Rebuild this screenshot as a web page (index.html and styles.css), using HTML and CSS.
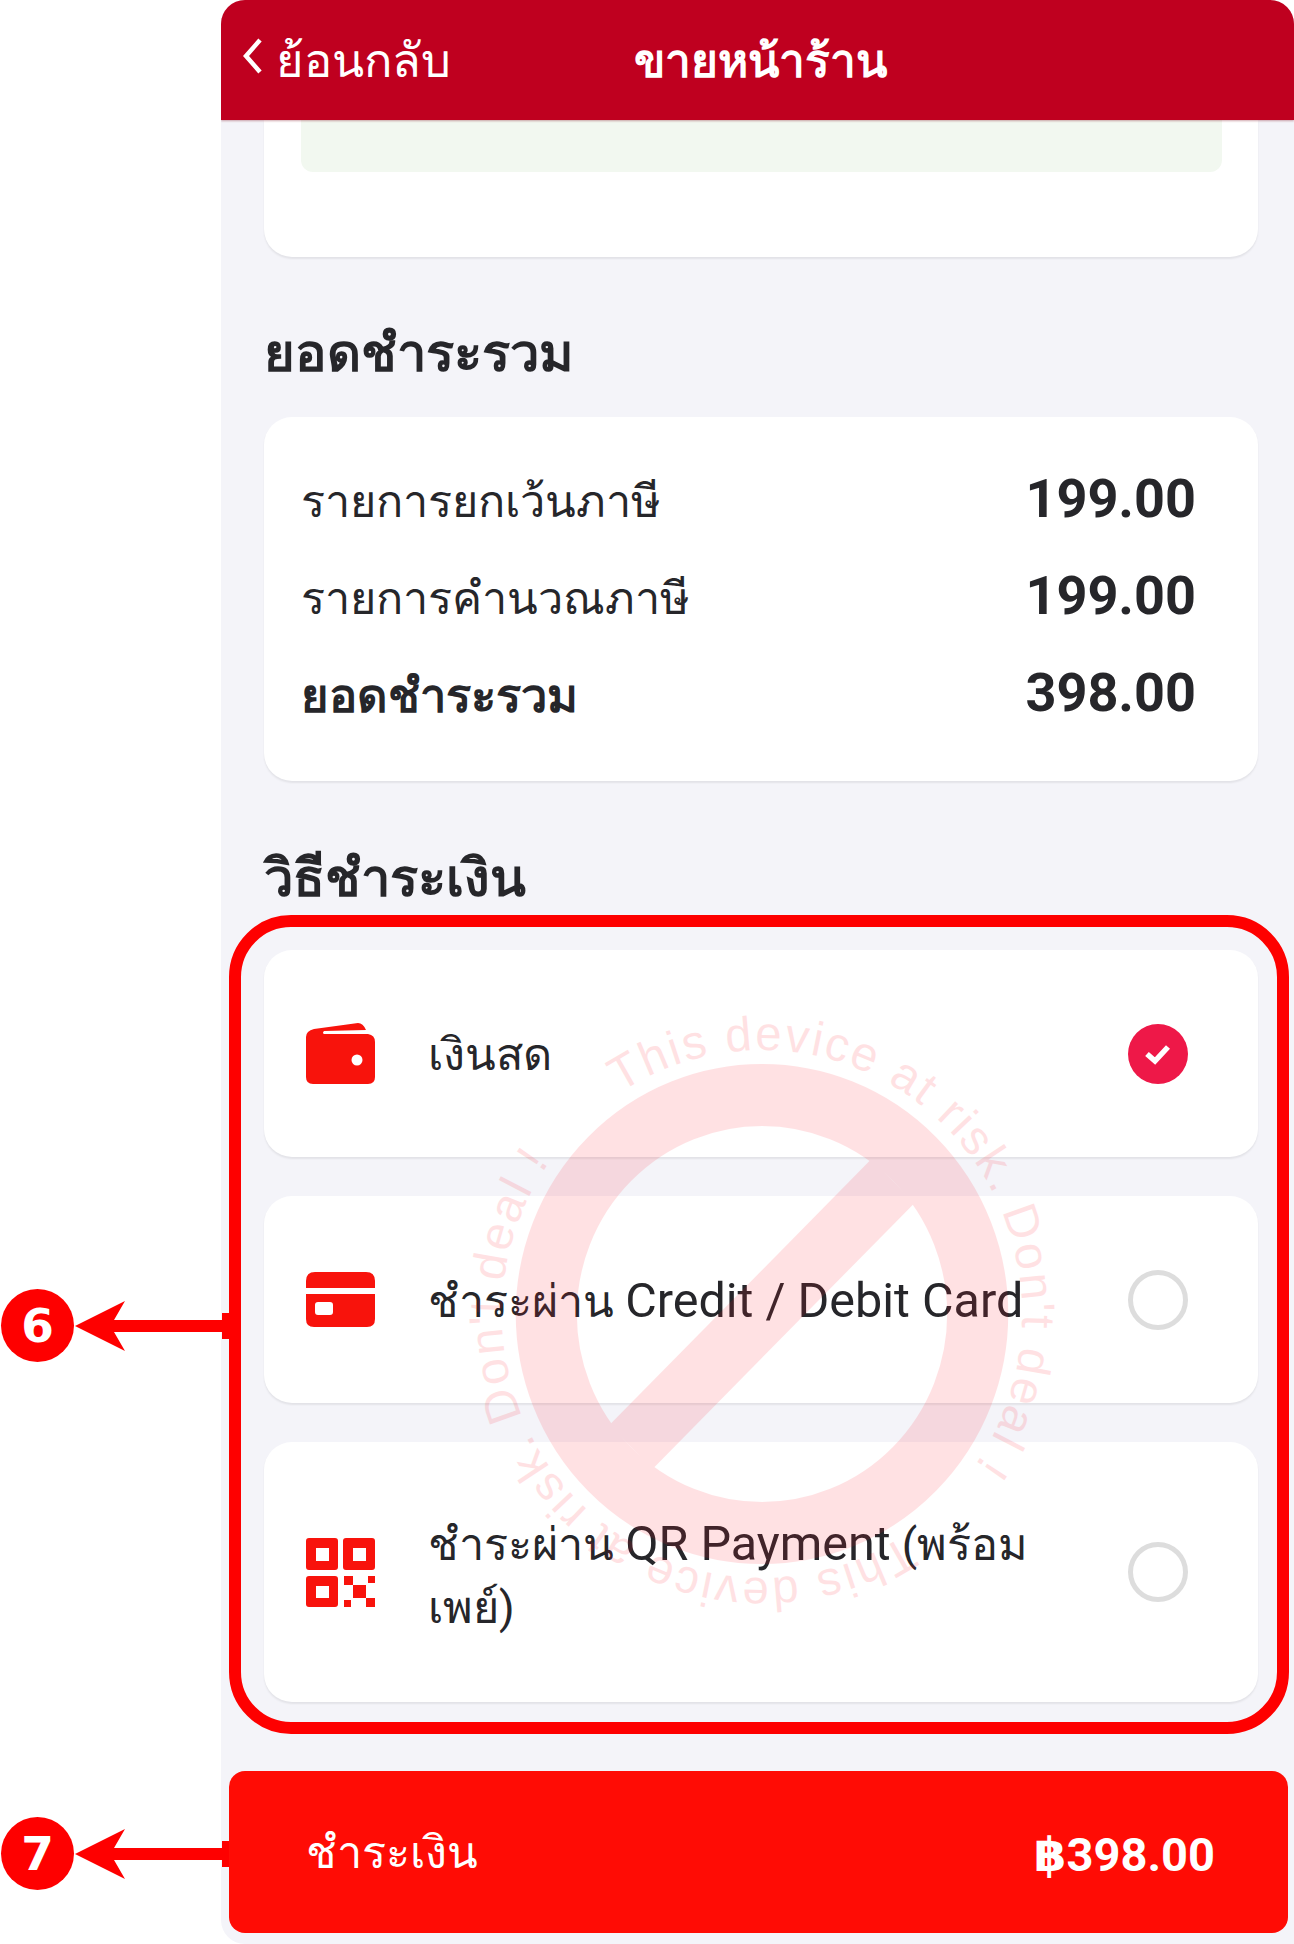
FILE: index.html
```html
<!DOCTYPE html>
<html lang="th">
<head>
<meta charset="utf-8">
<title>ขายหน้าร้าน</title>
<link rel="stylesheet" href="styles.css">
</head>
<body>
<main class="phone">
  <header class="topbar">
    <div class="back">
      <svg class="chevron" viewBox="0 0 20 38" aria-hidden="true"><path d="M17 3 3 19l14 16"/></svg>
      <span>ย้อนกลับ</span>
    </div>
    <h1 class="title">ขายหน้าร้าน</h1>
    <div></div>
  </header>
  <div class="content">
    <section class="card first-card"><div class="green"></div></section>
    <h2 class="heading">ยอดชำระรวม</h2>
    <section class="card summary">
      <div class="row"><span class="row-label">รายการยกเว้นภาษี</span><b class="num">199.00</b></div>
      <div class="row"><span class="row-label">รายการคำนวณภาษี</span><b class="num">199.00</b></div>
      <div class="row"><strong class="row-label row-strong">ยอดชำระรวม</strong><b class="num">398.00</b></div>
    </section>
    <h2 class="heading heading-pay">วิธีชำระเงิน</h2>
    <div class="methods">
      <div class="card method">
        <svg class="icon" width="69" height="61" viewBox="0 0 69 61" aria-hidden="true"><path d="M8 6 52 0q5 0 8 7l-42 1q-2 2 0 3h44q7 1 7 8v35q0 7-7 7H7q-7 0-7-7V14q0-6 8-8Z"/><circle cx="51" cy="37" r="5.5" fill="#fff"/></svg>
        <span class="label">เงินสด</span>
        <span class="radio checked"><svg width="30" height="24" viewBox="0 0 30 24" aria-hidden="true"><path d="m4 12 8 7L25 5"/></svg></span>
      </div>
      <div class="card method">
        <svg class="icon" width="69" height="55" viewBox="0 0 69 55" aria-hidden="true"><path d="M9 0h51q9 0 9 9v7H0V9q0-9 9-9Z"/><path fill-rule="evenodd" d="M0 22h69v25q0 8-8 8H8q-8 0-8-8Zm12 8q-3 0-3 3v7q0 3 3 3h12q3 0 3-3v-7q0-3-3-3Z"/></svg>
        <span class="label">ชำระผ่าน <span class="latin">Credit / Debit Card</span></span>
        <span class="radio"></span>
      </div>
      <div class="card method method-tall">
        <svg class="icon" width="69" height="69" viewBox="0 0 69 69" aria-hidden="true"><path fill-rule="evenodd" d="M3 0h26q3 0 3 3v26q0 3-3 3H3q-3 0-3-3V3q0-3 3-3Zm7 10v13h13V10ZM40 0h26q3 0 3 3v26q0 3-3 3H40q-3 0-3-3V3q0-3 3-3Zm7 10v13h13V10ZM3 38h26q3 0 3 3v25q0 3-3 3H3q-3 0-3-3V41q0-3 3-3Zm7 10v12h13V48Z"/><path d="M38 38h9v9h-9zM62 38h7v7h-7zM47 47h13v13H47zM38 62h7v7h-7zM60 60h9v9h-9z"/></svg>
        <span class="label label-tall">ชำระผ่าน <span class="latin">QR Payment</span> (พร้อมเพย์)</span>
        <span class="radio"></span>
      </div>
    </div>
  </div>
  <div class="footer">
    <button class="pay" type="button"><span>ชำระเงิน</span><b class="pay-total">฿398.00</b></button>
  </div>
</main>

<svg class="watermark" width="700" height="700" viewBox="-350 -350 700 700" aria-hidden="true">
  <defs><path id="ring" d="M0 -264A264 264 0 1 1 -0.01 -264Z"/></defs>
  <g class="wm" transform="scale(.985 1)">
    <circle r="219" class="wm-stroke"/>
    <path class="wm-stroke" d="M-133 133 133 -133"/>
    <g class="wm-text">
      <text transform="rotate(-33)"><textPath href="#ring" textLength="728" lengthAdjust="spacing">This device at risk. Don't deal !</textPath></text>
      <text transform="rotate(147)"><textPath href="#ring" textLength="728" lengthAdjust="spacing">This device at risk. Don't deal !</textPath></text>
    </g>
  </g>
</svg>

<div class="frame-outline"></div>

<div class="callout callout-6"><span class="badge">6</span><svg class="arrow" width="155" height="52" viewBox="0 0 155 52" aria-hidden="true"><path d="M1 26 51 1 40 20h108V13h7v26h-7v-7H40l11 19Z"/></svg></div>
<div class="callout callout-7"><span class="badge">7</span><svg class="arrow" width="155" height="52" viewBox="0 0 155 52" aria-hidden="true"><path d="M1 26 51 1 40 20h108V13h7v26h-7v-7H40l11 19Z"/></svg></div>
</body>
</html>
```
FILE: styles.css
```css
* { box-sizing: border-box; }
html, body { margin: 0; background: #fff; }
body {
  position: relative;
  width: 1294px;
  height: 1944px;
  overflow: hidden;
  font-family: Roboto, "Noto Sans", "DejaVu Sans", sans-serif;
  color: #26262a;
}
.phone {
  margin-left: 221px;
  width: 1073px;
  height: 1944px;
  background: #f4f4f9;
  border-radius: 24px 24px 0 24px;
  overflow: hidden;
}
.topbar {
  display: grid;
  grid-template-columns: 1fr auto 1fr;
  align-items: center;
  height: 120px;
  background: #bf001f;
  color: #fff;
  box-shadow: 0 1px 2px rgba(120, 0, 20, .35);
  position: relative;
}
.back { display: flex; align-items: center; gap: 13px; margin-left: 22px; font-size: 47px; }
.chevron { width: 20px; height: 38px; fill: none; stroke: #fff; stroke-width: 4.5; margin-top: -8px; }
.title { margin: 0 0 0 6px; font-size: 46px; font-weight: 700; }
.content { padding: 0 36px 0 43px; }
.card {
  background: #fff;
  border-radius: 28px;
  box-shadow: 0 2px 2px rgba(0, 0, 0, .07);
}
.first-card { height: 137px; padding: 0 36px 0 37px; border-radius: 0 0 28px 28px; }
.green { height: 52px; background: #f2f8f0; border-radius: 0 0 12px 12px; }
.heading {
  margin: 0;
  padding: 64px 0 32px;
  font-size: 52.5px;
  line-height: 64px;
  font-weight: 700;
}
.heading-pay { padding: 65px 0 40px; }
.summary { padding: 33px 62px 40px 37px; font-size: 45px; }
.row { display: flex; justify-content: space-between; align-items: center; height: 97px; }
.row-label { padding-top: 5px; }
.row-strong { font-size: 47px; }
.num { font-size: 54px; font-weight: 700; }
.methods { display: flex; flex-direction: column; gap: 39px; }
.method {
  display: flex;
  align-items: center;
  height: 207px;
  padding: 0 70px 0 42px;
}
.method-tall { height: 260px; }
.icon { flex: none; fill: #f8130c; margin-right: 53px; }
.label { flex: 1; font-size: 45px; line-height: 63px; padding-top: 2px; padding-right: 78px; }
.label-tall { padding-top: 6px; }
.latin { font-size: 48.5px; }
.radio {
  flex: none;
  display: flex;
  align-items: center;
  justify-content: center;
  width: 60px;
  height: 60px;
  border: 5px solid #ddd;
  border-radius: 50%;
}
.radio.checked { background: #ee1848; border: 0; }
.radio svg { fill: none; stroke: #fff; stroke-width: 5.5; }
.footer { padding: 69px 6px 0 8px; }
.pay {
  display: flex;
  justify-content: space-between;
  align-items: center;
  width: 100%;
  height: 162px;
  padding: 0 73px 0 77px;
  border: 0;
  border-radius: 16px;
  background: #ff0c05;
  color: #fff;
  font: inherit;
  font-size: 45px;
}
.pay-total { padding-top: 4px; font-size: 47px; font-weight: 700; }

.watermark { position: absolute; left: 412px; top: 964px; pointer-events: none; }
.wm { opacity: .125; }
.wm-stroke { fill: none; stroke: #ff1a2a; stroke-width: 62; }
.wm-text { font-family: "Liberation Sans", sans-serif; font-size: 48px; fill: #ff1a2a; }

.frame-outline {
  position: absolute;
  left: 229px;
  top: 915px;
  width: 1060px;
  height: 819px;
  border: 12px solid #fe0000;
  border-radius: 62px;
  pointer-events: none;
}
.callout { position: absolute; left: 1px; display: flex; align-items: center; }
.callout-6 { top: 1289px; }
.callout-7 { top: 1817px; }
.badge {
  width: 73px;
  height: 73px;
  border-radius: 50%;
  background: #fe0000;
  color: #fff;
  font-family: "DejaVu Sans", sans-serif;
  font-size: 47px;
  font-weight: 700;
  line-height: 73px;
  text-align: center;
}
.arrow { fill: #fe0000; }
```
